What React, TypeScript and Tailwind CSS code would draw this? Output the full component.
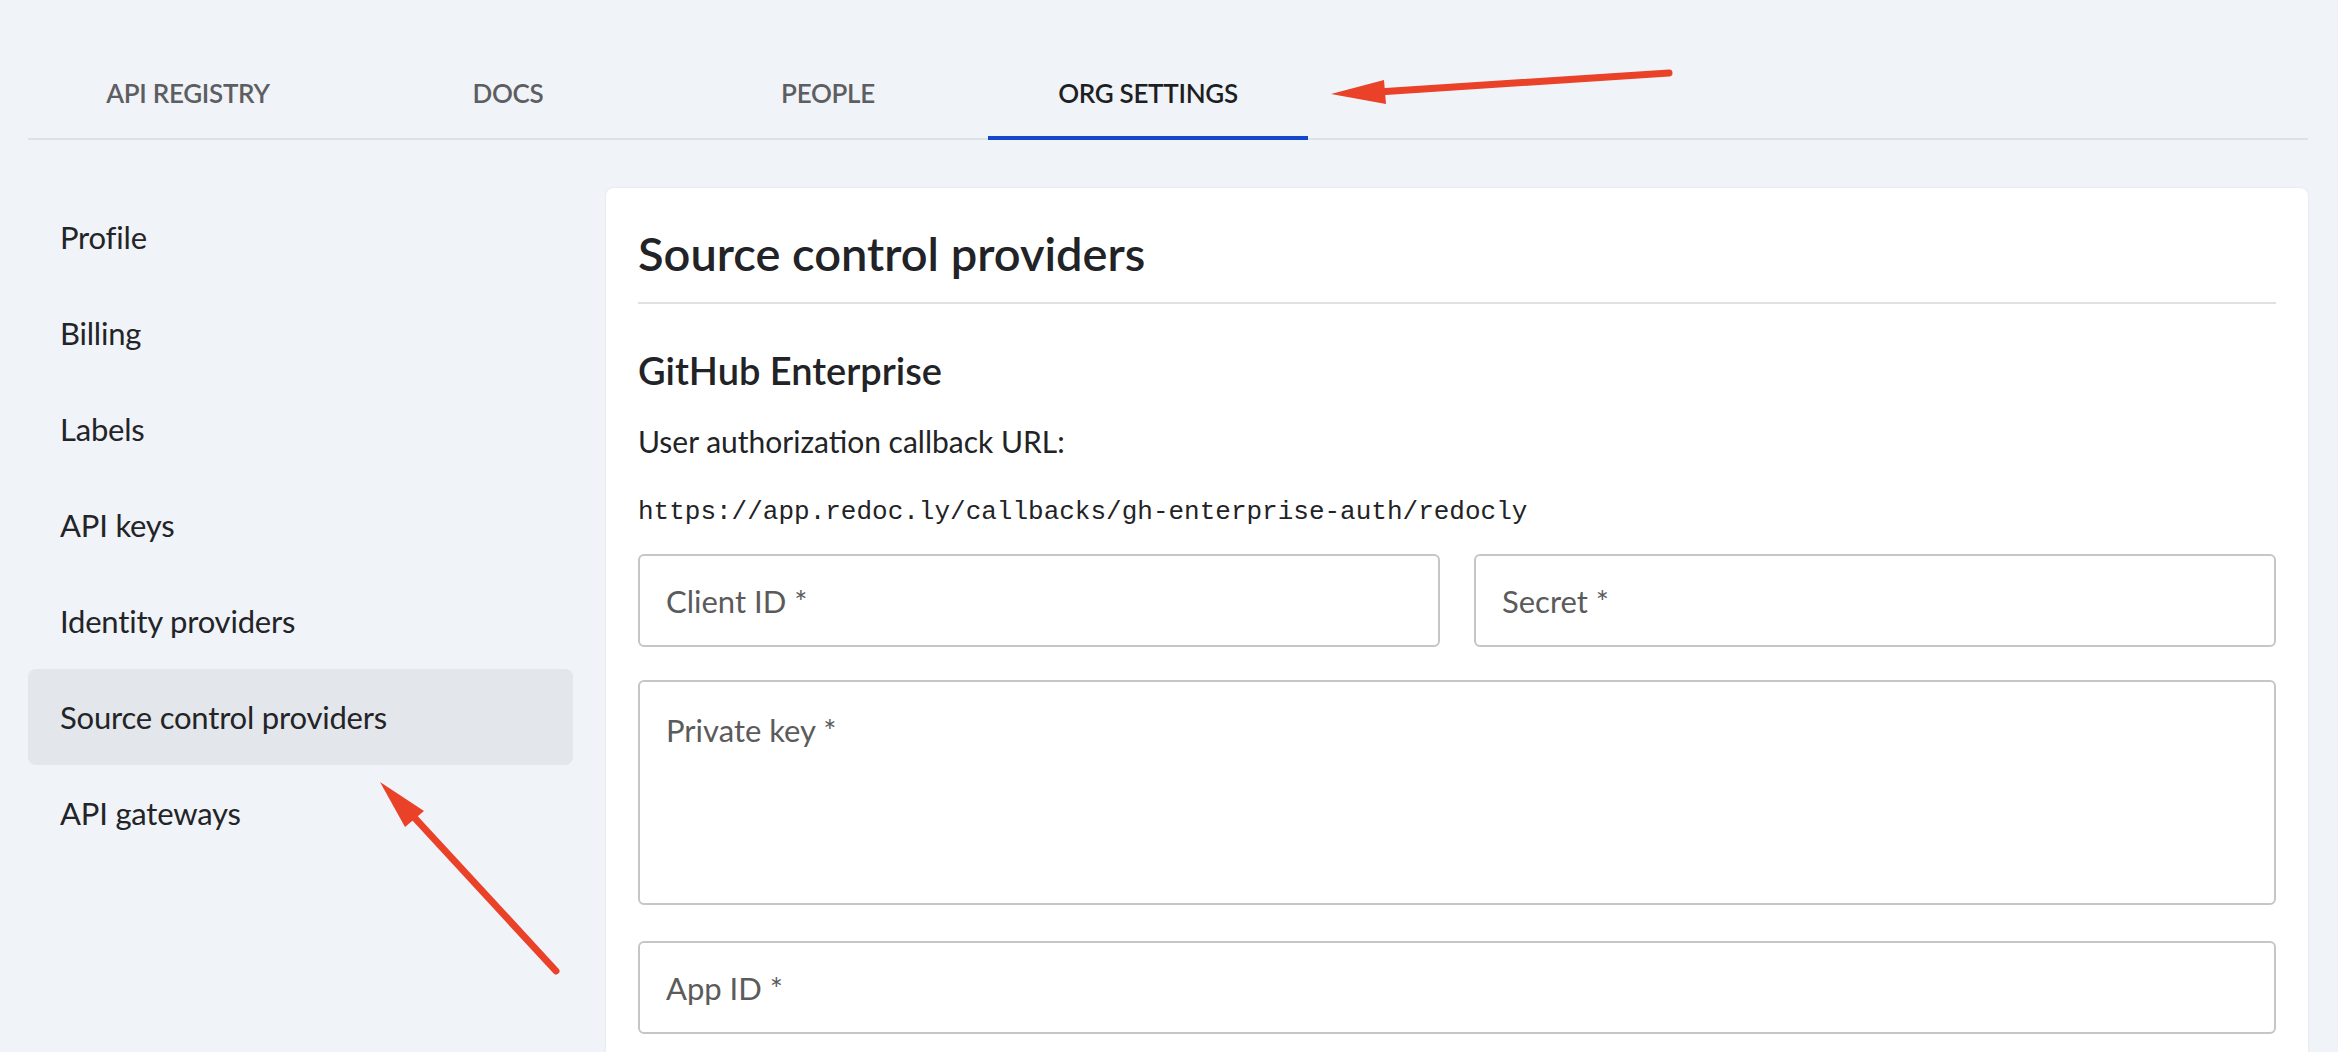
import { useState } from "react";

const tabs = ["API REGISTRY", "DOCS", "PEOPLE", "ORG SETTINGS"];

const menu = [
  "Profile",
  "Billing",
  "Labels",
  "API keys",
  "Identity providers",
  "Source control providers",
  "API gateways",
];

const font = { fontFamily: "Lato, 'Noto Sans', sans-serif" };

function Field({ label, tall }: { label: string; tall?: boolean }) {
  if (tall) {
    return (
      <textarea
        placeholder={label}
        className="w-full h-[225px] resize-none rounded-[6px] border-2 border-[#c6c6c6] bg-white px-[26px] pt-[28px] text-[31px] leading-[40px] text-[#222] placeholder:text-[#5b5b5b] outline-none"
      />
    );
  }
  return (
    <input
      placeholder={label}
      className="w-full h-[93px] rounded-[6px] border-2 border-[#c6c6c6] bg-white px-[26px] text-[31px] text-[#222] placeholder:text-[#5b5b5b] outline-none"
    />
  );
}

export default function App() {
  const [active, setActive] = useState("ORG SETTINGS");
  const [selected, setSelected] = useState("Source control providers");

  return (
    <div className="relative w-full h-[1052px] overflow-hidden bg-[#f0f3f8]" style={font}>
      {/* top tabs */}
      <div className="pt-[46px] pl-[28px] pr-[30px]">
        <div className="flex border-b-2 border-[#dce2ea]">
          {tabs.map((t) => (
            <button
              key={t}
              onClick={() => setActive(t)}
              className={`w-[320px] h-[94px] -mb-[2px] flex items-center justify-center text-[26px] tracking-[-0.3px] font-semibold ${
                active === t
                  ? "text-[#1e1f22] border-b-4 border-[#1448cc] pt-[4px]"
                  : "text-[#5d5e61]"
              }`}
            >
              {t}
            </button>
          ))}
        </div>
      </div>

      <div className="flex gap-[33px] pt-[49px] pl-[28px] pr-[30px]">
        {/* side menu */}
        <div className="w-[545px] shrink-0 flex flex-col">
          {menu.map((m) => (
            <button
              key={m}
              onClick={() => setSelected(m)}
              className={`h-[96px] pl-[32px] flex items-center rounded-[8px] text-[31px] tracking-[-0.2px] text-[#232427] text-left ${
                selected === m ? "bg-[#e3e6ea]" : ""
              }`}
            >
              {m}
            </button>
          ))}
        </div>

        {/* settings card */}
        <div className="flex-1 -mt-[1px] bg-white rounded-[8px] shadow-[0_0_3px_rgba(0,0,0,0.08)] px-[32px] pt-[36px] h-[900px]">
          <h1 className="text-[47px] leading-[58px] font-semibold text-[#222326] pb-[20px] border-b-2 border-[#e1e1e1]">
            Source control providers
          </h1>
          <h2 className="mt-[42px] text-[38px] leading-[48px] font-semibold text-[#222326]">
            GitHub Enterprise
          </h2>
          <p className="mt-[29px] text-[30px] leading-[36px] text-[#222326]">
            User authorization callback URL:
          </p>
          <p
            className="mt-[37px] text-[26px] leading-[32px] text-[#222326]"
            style={{ fontFamily: "'Liberation Mono', monospace" }}
          >
            https://app.redoc.ly/callbacks/gh-enterprise-auth/redocly
          </p>
          <div className="mt-[26px] grid grid-cols-2 gap-[34px]">
            <Field label="Client ID *" />
            <Field label="Secret *" />
          </div>
          <div className="mt-[33px]">
            <Field label="Private key *" tall />
          </div>
          <div className="mt-[30px]">
            <Field label="App ID *" />
          </div>
        </div>
      </div>

      {/* red annotation arrows */}
      <svg
        className="absolute inset-0 pointer-events-none"
        width="2338"
        height="1052"
        viewBox="0 0 2338 1052"
      >
        <line x1="1669" y1="73" x2="1378" y2="92" stroke="#ea4129" strokeWidth="7" strokeLinecap="round" />
        <polygon points="1331,94 1384,80 1386,104" fill="#ea4129" />
        <line x1="556" y1="971" x2="412" y2="815" stroke="#ea4129" strokeWidth="7" strokeLinecap="round" />
        <polygon points="380,782 424,811 405,827" fill="#ea4129" />
      </svg>
    </div>
  );
}
